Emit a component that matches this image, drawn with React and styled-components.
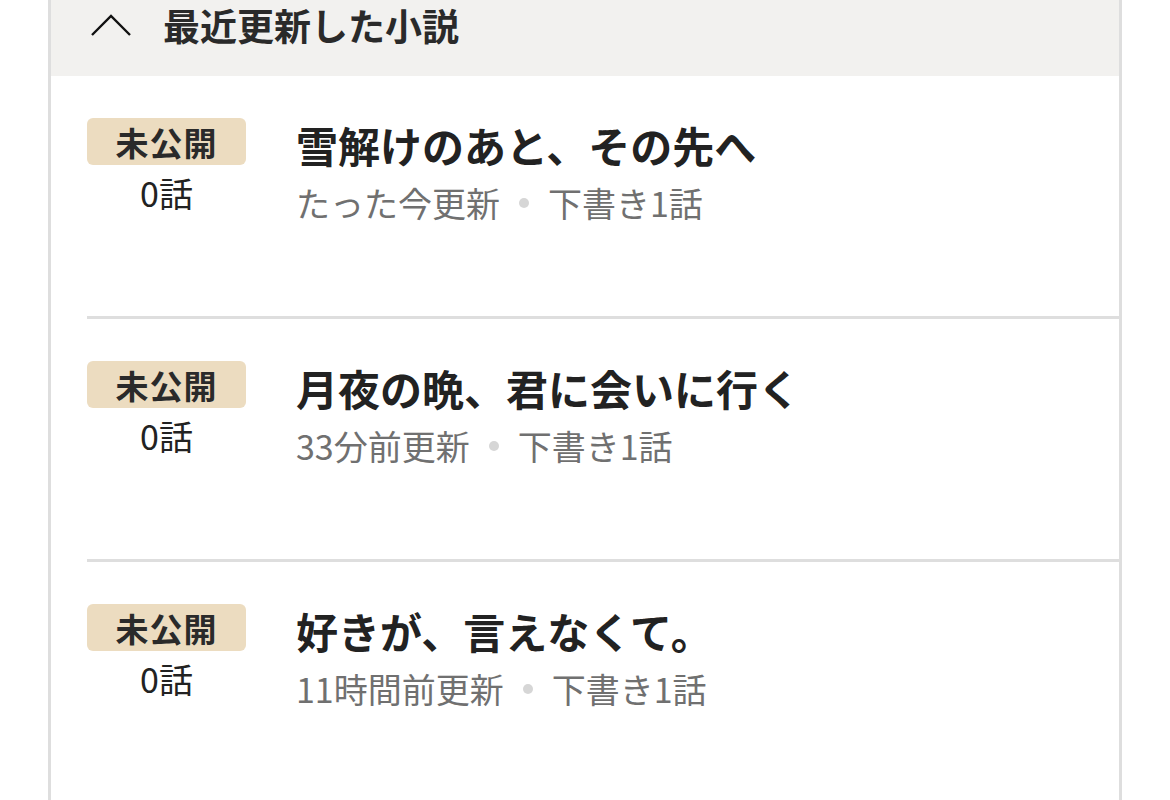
import React from "react";
import styled, { createGlobalStyle } from "styled-components";

const novels = [
  { title: "雪解けのあと、その先へ", updated: "たった今更新", drafts: "下書き1話" },
  { title: "月夜の晩、君に会いに行く", updated: "33分前更新", drafts: "下書き1話" },
  { title: "好きが、言えなくて。", updated: "11時間前更新", drafts: "下書き1話" },
];

export default function App() {
  return (
    <>
      <GlobalStyle />
      <Panel>
        <Header>
          <Chevron viewBox="0 0 40 22">
            <polyline points="1,21 20,2 39,21" />
          </Chevron>
          <HeaderTitle>最近更新した小説</HeaderTitle>
        </Header>
        {novels.map((n) => (
          <Row key={n.title}>
            <Status>
              <Badge>未公開</Badge>
              <Count>0話</Count>
            </Status>
            <Info>
              <Title>{n.title}</Title>
              <Meta>
                {n.updated}
                <Dot />
                {n.drafts}
              </Meta>
            </Info>
          </Row>
        ))}
      </Panel>
    </>
  );
}

const GlobalStyle = createGlobalStyle`
  body{
    margin: 0;
    background: #fff;
    font-family: "Noto Sans CJK JP", "Noto Sans", sans-serif;
    color: #222;
  }
`

const Panel = styled.div`
  margin-left: 48px;
  width: 1068px;
  min-height: 100vh;
  border-left: 3px solid #dedede;
  border-right: 3px solid #dedede;
  background: #fff;
`

const Header = styled.div`
  display: flex;
  align-items: center;
  gap: 32px;
  height: 76px;
  box-sizing: border-box;
  padding: 0 0 26px 40px;
  background: #f2f1ef;
`

const Chevron = styled.svg`
  width: 40px;
  height: 22px;
  fill: none;
  stroke: #111;
  stroke-width: 2.4;
`

const HeaderTitle = styled.h2`
  margin: 0;
  font-size: 37px;
  font-weight: 700;
  line-height: 1;
  color: #2a2a2a;
`

const Row = styled.div`
  display: flex;
  gap: 50px;
  margin-left: 36px;
  padding-top: 42px;
  box-sizing: border-box;
  height: 243px;
  border-bottom: 3px solid #dedede;
`

const Status = styled.div`
  display: flex;
  flex-direction: column;
  align-items: center;
  width: 159px;
`

const Badge = styled.div`
  width: 159px;
  height: 47px;
  border-radius: 6px;
  background: #ecdcc0;
  display: flex;
  align-items: center;
  justify-content: center;
  font-size: 33px;
  letter-spacing: 1px;
  font-weight: 700;
  color: #2a2a2a;
`

const Count = styled.div`
  margin-top: 8px;
  font-size: 34px;
  line-height: 40px;
  color: #222;
`

const Info = styled.div`
  display: flex;
  flex-direction: column;
`

const Title = styled.div`
  font-size: 42px;
  font-weight: 700;
  line-height: 54px;
  color: #222;
`

const Meta = styled.div`
  display: flex;
  align-items: center;
  margin-top: 9px;
  font-size: 34px;
  line-height: 44px;
  color: #707070;
`

const Dot = styled.span`
  width: 10px;
  height: 10px;
  border-radius: 50%;
  background: #d6d6d6;
  margin: 0 19px;
`
